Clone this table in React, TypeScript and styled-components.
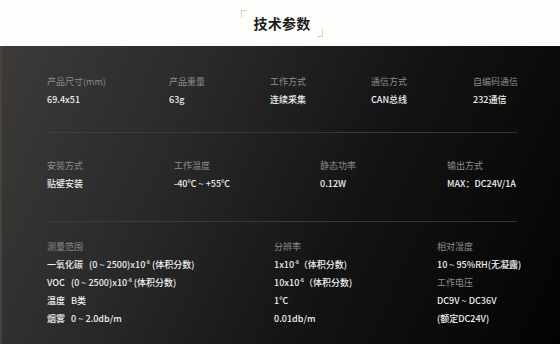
import React from "react";
import styled, { createGlobalStyle } from "styled-components";

type Spec = { label: string; value: React.ReactNode };

const rowOne: Spec[] = [
  { label: "产品尺寸(mm)", value: "69.4x51" },
  { label: "产品重量", value: "63g" },
  { label: "工作方式", value: "连续采集" },
  { label: "通信方式", value: "CAN总线" },
  { label: "自编码通信", value: "232通信" },
];

const rowTwo: Spec[] = [
  { label: "安装方式", value: "贴壁安装" },
  { label: "工作温度", value: "-40℃ ~ +55℃" },
  { label: "静态功率", value: "0.12W" },
  { label: "输出方式", value: "MAX：DC24V/1A" },
];

const Ppm = () => (
  <>
    x10<Sup>-6</Sup>
  </>
);

const App: React.FC = () => {
  return (
    <>
      <GlobalStyle />
      <Page>
        <Header>
          <Title>
            <Corner $side="start" />
            技术参数
            <Corner $side="end" />
          </Title>
        </Header>
        <Panel>
          <Row $cols="122px 101px 101px 102px 1fr">
            {rowOne.map((s) => (
              <Cell key={s.label}>
                <Label>{s.label}</Label>
                <Value>{s.value}</Value>
              </Cell>
            ))}
          </Row>
          <Divider $gap={26} />
          <Row $cols="127px 146px 127px 1fr" $top={27}>
            {rowTwo.map((s) => (
              <Cell key={s.label}>
                <Label>{s.label}</Label>
                <Value>{s.value}</Value>
              </Cell>
            ))}
          </Row>
          <Divider $gap={31} />
          <Row $cols="227px 163px 1fr" $top={19}>
            <Cell>
              <Label>测量范围</Label>
              <Value>一氧化碳&nbsp;&nbsp;&nbsp;(0 ~ 2500)<Ppm /> (体积分数)</Value>
              <Value>VOC&nbsp;&nbsp;&nbsp;(0 ~ 2500)<Ppm /> (体积分数)</Value>
              <Value>温度&nbsp;&nbsp;&nbsp;B类</Value>
              <Value>烟雾&nbsp;&nbsp;&nbsp;0 ~ 2.0db/m</Value>
            </Cell>
            <Cell>
              <Label>分辨率</Label>
              <Value>1<Ppm />（体积分数)</Value>
              <Value>10<Ppm />（体积分数)</Value>
              <Value>1℃</Value>
              <Value>0.01db/m</Value>
            </Cell>
            <Cell>
              <Label>相对湿度</Label>
              <Value>10 ~ 95%RH(无凝露)</Value>
              <Label>工作电压</Label>
              <Value>DC9V ~ DC36V</Value>
              <Value>(额定DC24V)</Value>
            </Cell>
          </Row>
        </Panel>
      </Page>
    </>
  );
};

export default App;

const GlobalStyle = createGlobalStyle`
  html, body {
    margin: 0;
    padding: 0;
    background: #fdfdfb;
  }
  body {
    font-family: "Noto Sans CJK SC", "Noto Sans", sans-serif;
  }
`;

const Page = styled.div`
  width: 560px;
  height: 344px;
  overflow: hidden;
  display: flex;
  flex-direction: column;
`;

const Header = styled.header`
  height: 46px;
  flex: none;
  display: flex;
  justify-content: center;
  align-items: center;
  background: #fdfdfb;
`;

const Title = styled.h2`
  position: relative;
  margin: 0 0 0 4px;
  padding: 0 13px;
  font-size: 14px;
  line-height: 18px;
  font-weight: 700;
  color: #1c1c1c;
  letter-spacing: 0.2px;
`;

const Corner = styled.span<{ $side: "start" | "end" }>`
  position: absolute;
  width: 5px;
  height: 7px;
  border-color: #d4d9ab;
  border-style: solid;
  border-width: 0;
  ${(p) =>
    p.$side === "start"
      ? "left: 0; top: -4px; border-left-width: 1.5px; border-top-width: 1.5px;"
      : "right: 0; bottom: -5px; border-right-width: 1.5px; border-bottom-width: 1.5px;"}
`;

const Panel = styled.section`
  flex: 1;
  box-sizing: border-box;
  padding: 30px 0 0 45px;
  background: linear-gradient(115deg, #3c3b3a 0%, #2a2a2a 30%, #131313 62%, #030303 100%);
  border-left: 2px solid #4b4239;
`;

const Row = styled.div<{ $cols: string; $top?: number }>`
  display: grid;
  grid-template-columns: ${(p) => p.$cols};
  padding-top: ${(p) => p.$top ?? 0}px;
`;

const Cell = styled.div`
  display: flex;
  flex-direction: column;
  gap: 6px;
`;

const Label = styled.div`
  font-size: 9px;
  line-height: 12px;
  color: #8c8c8c;
  white-space: nowrap;
`;

const Value = styled.div`
  font-size: 9px;
  line-height: 12px;
  font-weight: 500;
  color: #efefef;
  white-space: nowrap;
`;

const Sup = styled.sup`
  font-size: 5px;
  vertical-align: 4px;
  line-height: 0;
`;

const Divider = styled.div<{ $gap: number }>`
  height: 1px;
  width: 470px;
  margin-top: ${(p) => p.$gap}px;
  background: linear-gradient(90deg, rgba(90, 90, 90, 0.3), #3c3c3c 15%, #333 100%);
`;
